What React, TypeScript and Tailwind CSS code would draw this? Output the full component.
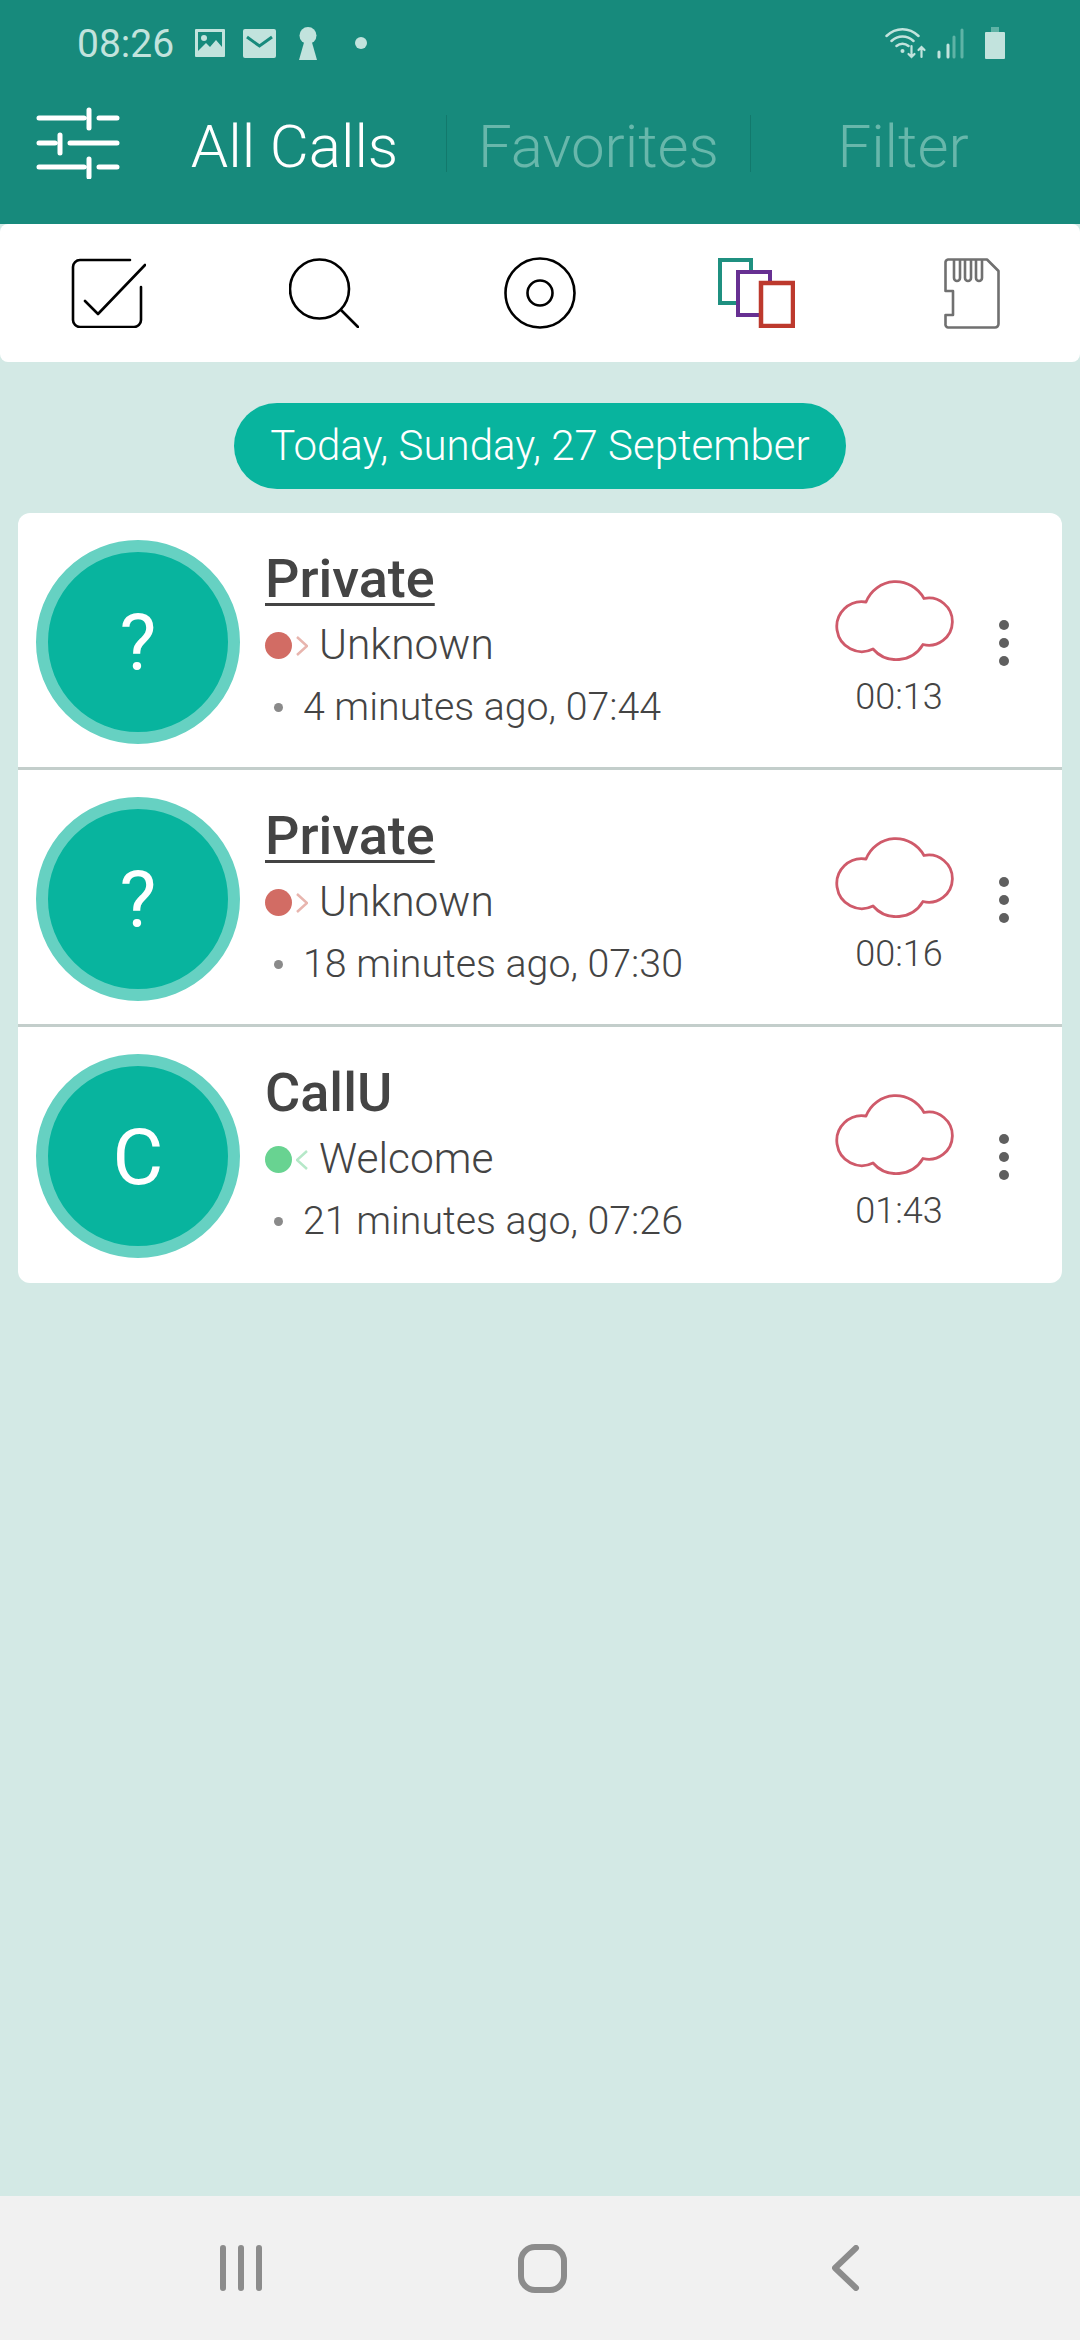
import React from 'react';

const SlidersIcon = () => (
  <svg width="84" height="72" viewBox="0 0 84 72" fill="none" stroke="#fff" strokeWidth="5" strokeLinecap="round">
    <path d="M3 11H48M63 11H81M53 3V21M3 36H19M34 36H81M24 28V46M3 60H48M63 60H81M53 52V70" />
  </svg>
);

const CheckIcon = () => (
  <svg width="75" height="70" viewBox="0 0 75 70" fill="none" stroke="#000" strokeWidth="2.6" strokeLinecap="round" strokeLinejoin="round">
    <path d="M59 2H9a7 7 0 0 0-7 7v53a7 7 0 0 0 7 7h54a7 7 0 0 0 7-7V29" />
    <path d="M14 43l13 13L74 7" />
  </svg>
);

const SearchIcon = () => (
  <svg width="70" height="70" viewBox="0 0 70 70" fill="none" stroke="#000" strokeWidth="2.6" strokeLinecap="round">
    <circle cx="30.5" cy="31" r="29.5" />
    <path d="M52 52l17 17" />
  </svg>
);

const TargetIcon = () => (
  <svg width="72" height="72" viewBox="0 0 72 72" fill="none" stroke="#000" strokeWidth="2.6">
    <circle cx="36" cy="36" r="34.5" />
    <circle cx="36" cy="36" r="12.5" />
  </svg>
);

const CopiesIcon = () => (
  <svg width="77" height="70" viewBox="0 0 77 70" fill="none" strokeWidth="4">
    <rect x="2" y="2" width="31" height="43" stroke="#1f9080" fill="#fff" />
    <rect x="20" y="14" width="32" height="43" stroke="#673092" fill="#fff" />
    <rect x="43" y="25" width="32" height="43" stroke="#bd392d" strokeWidth="4.5" fill="#fff" />
  </svg>
);

const SdIcon = () => (
  <svg width="56" height="71" viewBox="0 0 56 71" fill="none" stroke="#707070" strokeWidth="2.6" strokeLinejoin="round">
    <path d="M4 1.5H43L54.5 13V66a3.5 3.5 0 0 1-3.5 3.5H4A3 3 0 0 1 1.5 66V57H9V33H1.5V4A3 3 0 0 1 4 1.5Z" />
    <path d="M10 2V20a3 3 0 0 0 6 0V2M21 2V20a3 3 0 0 0 6 0V2M32 2V20a3 3 0 0 0 6 0V2" />
  </svg>
);

const CloudIcon = () => (
  <svg width="119" height="83" viewBox="0 0 119 83" fill="none" stroke="#cf5a6a" strokeWidth="2.8" strokeLinejoin="round">
    <path d="M31 24A32 32 0 0 1 89 20.5A23.6 23.6 0 1 1 88 66.5A31 31 0 0 1 38 71A25 25 0 1 1 31 24Z" />
  </svg>
);

const ImageIcon = () => (
  <svg width="30" height="28" viewBox="0 0 30 28">
    <rect width="30" height="28" rx="1" fill="#c2e3dd" />
    <rect x="3" y="3" width="24" height="22" fill="#178a7c" />
    <circle cx="9" cy="9" r="3" fill="#c2e3dd" />
    <path d="M3 22L11 14L15 18L21 11L27 18V25H3Z" fill="#c2e3dd" />
  </svg>
);

const MailIcon = () => (
  <svg width="33" height="29" viewBox="0 0 33 29">
    <rect width="33" height="29" rx="2" fill="#c2e3dd" />
    <path d="M4 8L16.5 17L29 8" fill="none" stroke="#178a7c" strokeWidth="3" />
  </svg>
);

const KeyholeIcon = () => (
  <svg width="18" height="33" viewBox="0 0 18 33">
    <circle cx="9" cy="8.5" r="8.5" fill="#c2e3dd" />
    <path d="M6 12H12L18 33H0Z" fill="#c2e3dd" />
  </svg>
);

const WifiIcon = () => (
  <svg width="42" height="32" viewBox="0 0 42 32" fill="none" stroke="#c2e3dd" strokeWidth="2.5" strokeLinecap="round">
    <path d="M1.5 9C11 0 24 0 33.5 9M6.5 14C13 8 22 8 28.5 14M11.5 19C15 16 20 16 23.5 19" />
    <circle cx="17.5" cy="24" r="2" fill="#c2e3dd" stroke="none" />
    <path d="M26.5 19V30M23.5 27L26.5 30L29.5 27M36.5 30V20M33.5 23L36.5 20L39.5 23" strokeWidth="2.2" />
  </svg>
);

const SignalIcon = () => (
  <svg width="27" height="31" viewBox="0 0 27 31" fill="none" strokeWidth="3" strokeLinecap="round">
    <path d="M2 24V29M11 17V29" stroke="#c2e3dd" />
    <path d="M17 9V29M25 2V29" stroke="#5fb3a6" />
  </svg>
);

const BatteryIcon = () => (
  <svg width="20" height="32" viewBox="0 0 20 32">
    <path d="M6 0H14V5H6Z" fill="#5fb3a6" />
    <path d="M1 5H19a1 1 0 0 1 1 1V31a1 1 0 0 1-1 1H1a1 1 0 0 1-1-1V6a1 1 0 0 1 1-1Z" fill="#c2e3dd" />
  </svg>
);

const calls = [
  { id: 1, initial: '?', name: 'Private', underline: true, label: 'Unknown', missed: true, time: '4 minutes ago, 07:44', length: '00:13' },
  { id: 2, initial: '?', name: 'Private', underline: true, label: 'Unknown', missed: true, time: '18 minutes ago, 07:30', length: '00:16' },
  { id: 3, initial: 'C', name: 'CallU', underline: false, label: 'Welcome', missed: false, time: '21 minutes ago, 07:26', length: '01:43' },
];

const App = () => {
  return (
    <div className="h-[2340px] w-[1080px] flex flex-col bg-[#d3e9e5] font-['Roboto',sans-serif] overflow-hidden">
      {/* Status bar + tabs */}
      <header className="bg-[#178a7c] h-[224px] shrink-0">
        <div className="h-[86px] flex items-center text-[#c2e3dd]">
          <span className="ml-[77px] w-[97px] text-[39px] leading-none pt-[2px]">08:26</span>
          <span className="ml-[21px] flex items-center">
            <ImageIcon />
          </span>
          <span className="ml-[18px] flex items-center">
            <MailIcon />
          </span>
          <span className="ml-[23px] flex items-center">
            <KeyholeIcon />
          </span>
          <span className="ml-[38px] w-3 h-3 rounded-full bg-[#c2e3dd]" />
          <span className="ml-auto flex items-center">
            <WifiIcon />
          </span>
          <span className="ml-[10px] flex items-center">
            <SignalIcon />
          </span>
          <span className="ml-[21px] mr-[75px] flex items-center">
            <BatteryIcon />
          </span>
        </div>
        <div className="flex items-center h-[114px]">
          <div className="ml-[36px] w-[107px] shrink-0 flex">
            <SlidersIcon />
          </div>
          <div className="w-[304px] h-[57px] border-r border-[#12796c] flex items-center justify-center pt-[8px] text-[60px] leading-none font-light text-white">
            All Calls
          </div>
          <div className="w-[304px] h-[57px] border-r border-[#12796c] flex items-center justify-center pt-[8px] text-[60px] leading-none font-light text-[#68b7ab]">
            Favorites
          </div>
          <div className="w-[304px] h-[57px] flex items-center justify-center pt-[8px] text-[60px] leading-none font-light text-[#68b7ab]">
            Filter
          </div>
        </div>
      </header>

      {/* Toolbar */}
      <div className="bg-white h-[138px] shrink-0 rounded-lg grid grid-cols-5 items-center justify-items-center">
        <CheckIcon />
        <SearchIcon />
        <TargetIcon />
        <CopiesIcon />
        <SdIcon />
      </div>

      <main className="flex-1 px-[18px]">
        <div className="flex justify-center mt-[41px]">
          <div className="w-[612px] h-[86px] rounded-full bg-[#08b49e] text-white text-[42px] leading-none font-light flex items-center justify-center">
            Today, Sunday, 27 September
          </div>
        </div>

        <div className="mt-6 bg-white rounded-xl overflow-hidden">
          {calls.map((call, index) => (
            <div
              key={call.id}
              className={`flex items-center pl-[18px] text-[#444] ${index < calls.length - 1 ? 'h-[257px] pt-[3px] border-b-[3px] border-[#c3cecb]' : 'h-[256px] pt-[1px]'}`}
            >
              <div className="w-[204px] h-[204px] shrink-0 rounded-full border-[12px] border-[#66d1c2] bg-[#08b49e] text-white text-[78px] leading-none pt-1 flex items-center justify-center">
                {call.initial}
              </div>

              <div className="ml-[25px] flex-1 min-w-0">
                <div className={`text-[54px] leading-[56px] font-medium ${call.underline ? 'underline decoration-[3px] underline-offset-[6px]' : ''}`}>
                  {call.name}
                </div>
                <div className="mt-[12px] flex items-center h-[54px]">
                  <span className={`w-[27px] h-[27px] rounded-full ${call.missed ? 'bg-[#d26c64]' : 'bg-[#68d391]'}`} />
                  <svg width="12" height="20" viewBox="0 0 12 20" fill="none" strokeWidth="2.5" className="ml-[4px]" stroke={call.missed ? '#e8b5ae' : '#b5e8c8'}>
                    {call.missed ? <path d="M1 1l10 9L1 19" /> : <path d="M11 1L1 10l10 9" />}
                  </svg>
                  <span className="ml-[11px] text-[42.5px] leading-none font-light">{call.label}</span>
                </div>
                <div className="mt-[10px] flex items-center h-[50px]">
                  <span className="ml-[9px] w-[9px] h-[9px] rounded-full bg-[#8a8a8a]" />
                  <span className="ml-[20px] text-[39.3px] leading-none font-light">{call.time}</span>
                </div>
              </div>

              <div className="w-[119px] pt-[9px] shrink-0 flex flex-col items-center -mr-[1px]">
                <CloudIcon />
                <span className="mt-[18px] pl-[9px] text-[36px] leading-none font-light">{call.length}</span>
              </div>

              <div className="w-[109px] pr-[7px] shrink-0 flex flex-col items-center gap-2 pt-[2px]">
                <span className="w-[10px] h-[10px] rounded-full bg-[#5f5f5f]" />
                <span className="w-[10px] h-[10px] rounded-full bg-[#5f5f5f]" />
                <span className="w-[10px] h-[10px] rounded-full bg-[#5f5f5f]" />
              </div>
            </div>
          ))}
        </div>
      </main>

      {/* Android nav bar */}
      <nav className="h-[144px] shrink-0 bg-[#f1f1f1] flex items-center">
        <svg width="42" height="46" viewBox="0 0 42 46" fill="none" stroke="#8c8c8c" strokeWidth="6" strokeLinecap="round" className="ml-[220px]">
          <path d="M3 3V43M21 3V43M39 3V43" />
        </svg>
        <svg width="49" height="49" viewBox="0 0 49 49" fill="none" stroke="#8c8c8c" strokeWidth="6" className="ml-[256px]">
          <rect x="3" y="3" width="43" height="43" rx="14" />
        </svg>
        <svg width="28" height="46" viewBox="0 0 28 46" fill="none" stroke="#8c8c8c" strokeWidth="6" strokeLinecap="round" strokeLinejoin="round" className="ml-[265px]">
          <path d="M24 3L3 23L24 43" />
        </svg>
      </nav>
    </div>
  );
};

export default App;
